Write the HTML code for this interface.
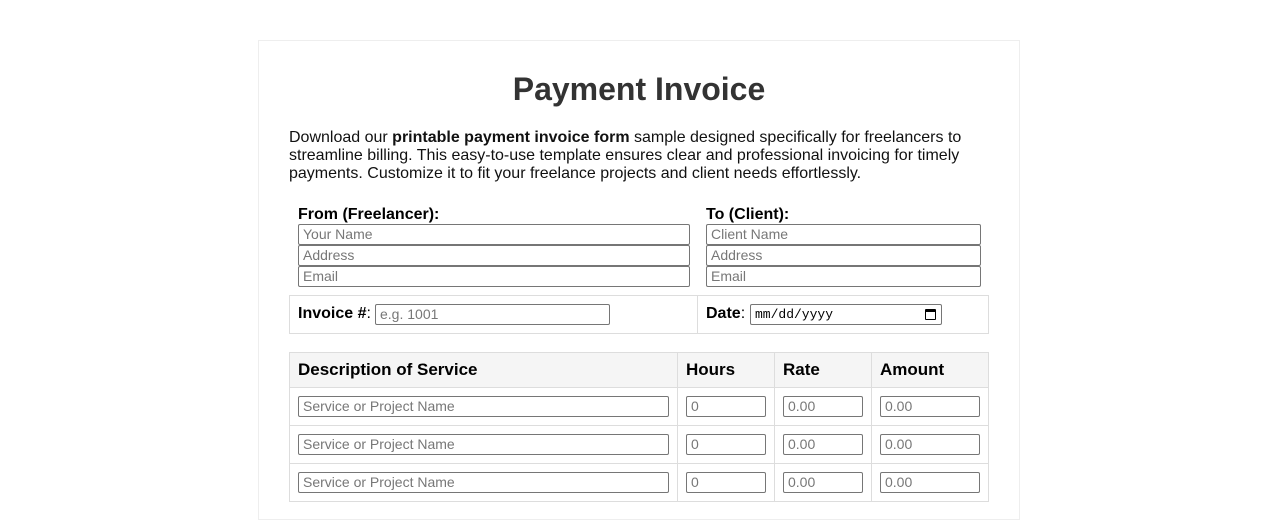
<!DOCTYPE html>
<html><head><style>
*{box-sizing:border-box}
body{margin:0;background:#fff;font-family:"Liberation Sans",Arial,sans-serif;width:1278px;height:501px;overflow:hidden;position:relative}
.a{position:absolute}
.box{left:258px;top:40px;width:762px;height:480px;border:1px solid #eee}
h1{position:absolute;left:0;width:1278px;text-align:center;top:70px;margin:0;font-size:32px;color:#333;line-height:38px}
p{position:absolute;left:289px;top:129px;width:700px;margin:0;font-size:16px;line-height:18px;color:#111}
.lbl{font-weight:bold;font-size:16px;color:#000}
.in{position:absolute;border:1px solid #767676;border-radius:2px;font-size:14px;color:#777;padding:0 4px;line-height:19px;height:21px;background:#fff}
.cell{position:absolute;border:1px solid #ddd}
</style></head><body>
<div class="a box"></div>
<h1>Payment Invoice</h1>
<p>Download our <b>printable payment invoice form</b> sample designed specifically for freelancers to streamline billing. This easy-to-use template ensures clear and professional invoicing for timely payments. Customize it to fit your freelance projects and client needs effortlessly.</p>
<div class="a lbl" style="left:298px;top:206px">From (Freelancer):</div>
<div class="a lbl" style="left:706px;top:206px">To (Client):</div>
<div class="in" style="left:298px;top:224px;width:392px">Your Name</div>
<div class="in" style="left:298px;top:245px;width:392px">Address</div>
<div class="in" style="left:298px;top:266px;width:392px">Email</div>
<div class="in" style="left:706px;top:224px;width:275px">Client Name</div>
<div class="in" style="left:706px;top:245px;width:275px">Address</div>
<div class="in" style="left:706px;top:266px;width:275px">Email</div>
<div class="cell" style="left:289px;top:295px;width:409px;height:39px"></div>
<div class="cell" style="left:697px;top:295px;width:292px;height:39px"></div>
<div class="a" style="left:298px;top:305px;font-size:16px"><b>Invoice #</b>:</div>
<div class="in" style="left:375px;top:304px;width:235px;height:21px">e.g. 1001</div>
<div class="a" style="left:706px;top:305px;font-size:16px"><b>Date</b>:</div>
<div class="in" style="left:750px;top:304px;width:192px;color:#000;font-family:'Liberation Mono',monospace;font-size:13px">mm/dd/yyyy<span style="position:absolute;right:5px;top:4px;width:11px;height:11px;border:1.5px solid #000;border-top-width:3px;border-radius:1px"></span></div>
<div class="cell" style="left:289px;top:352px;width:389px;height:36px;background:#f5f5f5"></div>
<div class="cell" style="left:677px;top:352px;width:98px;height:36px;background:#f5f5f5"></div>
<div class="cell" style="left:774px;top:352px;width:98px;height:36px;background:#f5f5f5"></div>
<div class="cell" style="left:871px;top:352px;width:118px;height:36px;background:#f5f5f5"></div>
<div class="a lbl" style="left:298px;top:360px;font-size:17px">Description of Service</div>
<div class="a lbl" style="left:686px;top:360px;font-size:17px">Hours</div>
<div class="a lbl" style="left:783px;top:360px;font-size:17px">Rate</div>
<div class="a lbl" style="left:880px;top:360px;font-size:17px">Amount</div>
<div class="cell" style="left:289px;top:387px;width:389px;height:39px"></div><div class="cell" style="left:677px;top:387px;width:98px;height:39px"></div><div class="cell" style="left:774px;top:387px;width:98px;height:39px"></div><div class="cell" style="left:871px;top:387px;width:118px;height:39px"></div>
<div class="cell" style="left:289px;top:425px;width:389px;height:39px"></div><div class="cell" style="left:677px;top:425px;width:98px;height:39px"></div><div class="cell" style="left:774px;top:425px;width:98px;height:39px"></div><div class="cell" style="left:871px;top:425px;width:118px;height:39px"></div>
<div class="cell" style="left:289px;top:463px;width:389px;height:39px"></div><div class="cell" style="left:677px;top:463px;width:98px;height:39px"></div><div class="cell" style="left:774px;top:463px;width:98px;height:39px"></div><div class="cell" style="left:871px;top:463px;width:118px;height:39px"></div>
<div class="in" style="left:298px;top:396px;width:371px">Service or Project Name</div><div class="in" style="left:686px;top:396px;width:80px">0</div><div class="in" style="left:783px;top:396px;width:80px">0.00</div><div class="in" style="left:880px;top:396px;width:100px">0.00</div>
<div class="in" style="left:298px;top:434px;width:371px">Service or Project Name</div><div class="in" style="left:686px;top:434px;width:80px">0</div><div class="in" style="left:783px;top:434px;width:80px">0.00</div><div class="in" style="left:880px;top:434px;width:100px">0.00</div>
<div class="in" style="left:298px;top:472px;width:371px">Service or Project Name</div><div class="in" style="left:686px;top:472px;width:80px">0</div><div class="in" style="left:783px;top:472px;width:80px">0.00</div><div class="in" style="left:880px;top:472px;width:100px">0.00</div>
</body></html>
